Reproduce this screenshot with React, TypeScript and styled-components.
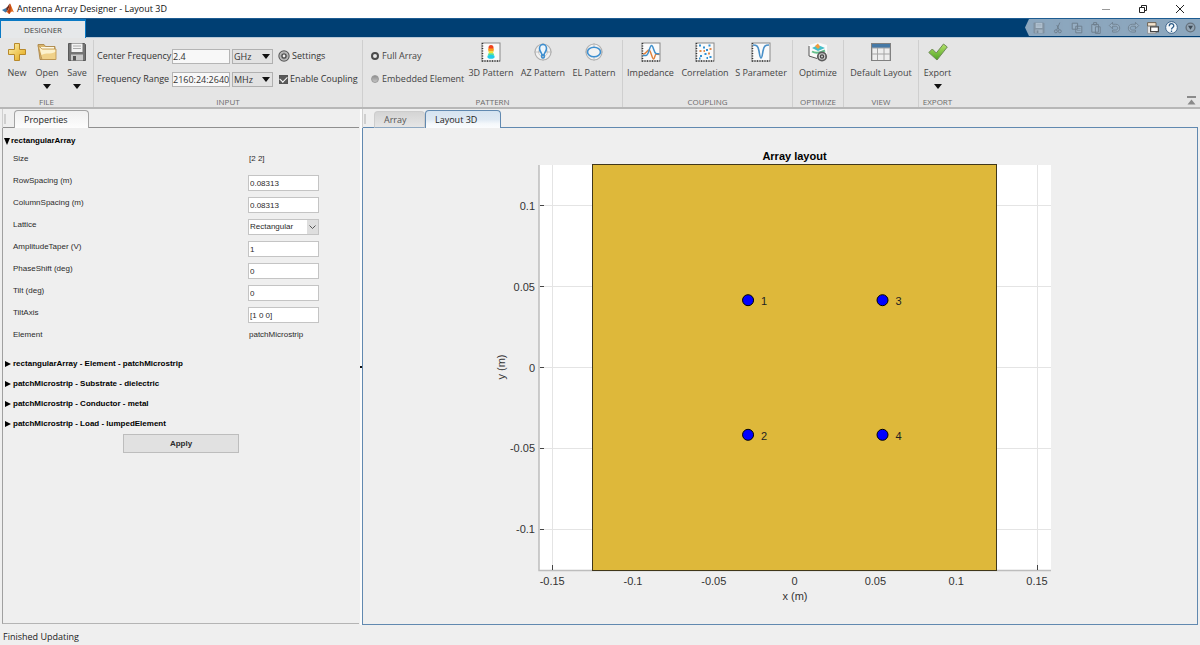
import React, { useState } from "react";
import styled, { createGlobalStyle } from "styled-components";

const uiFont = '"Open Sans", "Noto Sans", sans-serif';
const plainFont = '"Liberation Sans", Arial, sans-serif';

const GlobalStyle = createGlobalStyle`
  * { box-sizing: border-box; }
  body { margin: 0; background: #efefef; font: 9px/14px ${uiFont}; color: #2b2b2b; }
  button, input, select { font: inherit; color: inherit; margin: 0; }
`;

const Window = styled.div`
  display: flex;
  flex-direction: column;
  min-height: 100vh;
`;

/* ---------- title bar ---------- */

const TitleBar = styled.header`
  display: flex;
  align-items: center;
  height: 18px;
  padding: 0 2px;
  background: #fff;
`;

const Title = styled.h1`
  flex: 1;
  margin: 0 0 0 3px;
  font-size: 9px;
  font-weight: 400;
  line-height: 18px;
  color: #111;
`;

const WindowButton = styled.button`
  display: grid;
  place-items: center;
  width: 37px;
  height: 18px;
  padding: 0;
  border: 0;
  background: none;
`;

/* ---------- blue strip ---------- */

const Strip = styled.div`
  display: flex;
  justify-content: space-between;
  height: 20px;
  background: #003f73;
  border-top: 1px solid #1d5c92;
  border-bottom: 1px solid #b9c9d8;
`;

const StripTab = styled.button`
  width: 86px;
  height: 19px;
  padding: 0;
  border: 1px solid #0a79c4;
  border-top-width: 2px;
  border-bottom: 0;
  background: #e6e8ea;
  font-size: 8px;
  line-height: 16px;
  color: #444;
`;

const QuickBar = styled.div`
  display: flex;
  align-items: center;
  height: 17px;
  padding-left: 4px;
  background: #8ca7be;
  clip-path: polygon(4px 0, 100% 0, 100% 100%, 4px 100%, 0 50%);
`;

const QuickButton = styled.button<{ $dim?: boolean }>`
  display: grid;
  place-items: center;
  width: 19px;
  height: 17px;
  padding: 0;
  border: 0;
  background: none;
  opacity: ${(p) => (p.$dim ? 0.35 : 1)};
`;

/* ---------- ribbon ---------- */

const Ribbon = styled.div`
  display: flex;
  height: 71px;
  background: #e5e5e5;
  border-bottom: 2px solid #b7b7b7;
`;

const Group = styled.section<{ $width: number; $last?: boolean }>`
  display: flex;
  flex-direction: column;
  flex: none;
  width: ${(p) => p.$width}px;
  margin-top: 2px;
  border-right: ${(p) => (p.$last ? "0" : "1px solid #cfcfcf")};
`;

const GroupBody = styled.div<{ $indent?: number }>`
  display: flex;
  flex: 1;
  padding-left: ${(p) => p.$indent ?? 0}px;
`;

const GroupName = styled.h2`
  margin: 0;
  font-size: 8px;
  font-weight: 400;
  line-height: 11px;
  text-align: center;
  color: #6b6b6b;
`;

const Tool = styled.button<{ $width: number }>`
  display: flex;
  flex-direction: column;
  align-items: center;
  flex: none;
  width: ${(p) => p.$width}px;
  padding: 2px 0 0;
  border: 0;
  background: none;
  line-height: 14px;
  white-space: nowrap;
  color: #444;

  > svg:first-child { margin-bottom: 4px; }
  > svg:nth-of-type(2) { margin-top: 4px; }
`;

const InputGrid = styled.div`
  display: grid;
  grid-template-columns: 73px 58px 41px 1fr;
  grid-auto-rows: 14px;
  gap: 9px 2px;
  padding-top: 9px;
  line-height: 14px;
  color: #333;
  white-space: nowrap;
`;

const TextBox = styled.input`
  width: 100%;
  min-width: 0;
  height: 15px;
  padding: 0;
  border: 1px solid #b5b5b5;
  background: #f8f8f8;
`;

const Picker = styled.span`
  position: relative;
  display: block;
  height: 15px;

  svg {
    position: absolute;
    right: 3px;
    top: 5px;
    pointer-events: none;
  }
`;

const UnitSelect = styled.select`
  appearance: none;
  display: block;
  width: 100%;
  height: 15px;
  padding: 0 1px;
  border: 1px solid #b0b0b0;
  background: #e2e2e2;
  line-height: 13px;
`;

const SettingsButton = styled.button`
  display: flex;
  align-items: center;
  gap: 2px;
  padding: 0 0 0 3px;
  border: 0;
  background: none;
`;

const CheckLabel = styled.label`
  display: flex;
  align-items: center;
  gap: 2px;
  padding-left: 4px;
`;

const Check = styled.input`
  appearance: none;
  width: 9px;
  height: 9px;
  margin: 0;
  border: 1px solid #555;
  background: #5a5a5a;

  &:checked::after {
    content: "";
    display: block;
    width: 6px;
    height: 4px;
    border: solid #fff;
    border-width: 0 0 1px 1px;
    transform: rotate(-45deg);
  }
`;

const RadioColumn = styled.div`
  display: flex;
  flex-direction: column;
  gap: 9px;
  width: 94px;
  padding: 9px 0 0;
  white-space: nowrap;
  color: #444;
`;

const RadioLabel = styled.label`
  display: flex;
  align-items: center;
  gap: 3px;
  height: 14px;
`;

const Radio = styled.input`
  appearance: none;
  width: 8px;
  height: 8px;
  margin: 0;
  border-radius: 50%;
  border: 1px solid #9a9a9a;
  background: linear-gradient(#909090, #c4c4c4);

  &:checked {
    border: 2px solid #4c4c4c;
    background: #e8e8e8;
  }
`;

const RibbonEnd = styled.div`
  display: flex;
  flex: 1;
  justify-content: flex-end;
  align-items: flex-end;
  padding: 0 4px 2px 0;
`;

const PlainButton = styled.button`
  display: grid;
  padding: 0;
  border: 0;
  background: none;
`;

/* ---------- documents ---------- */

const Workspace = styled.main`
  display: grid;
  grid-template-columns: 357px 3px minmax(0, 1fr);
  flex: 1;
  padding: 0 2px;
`;

const Column = styled.div`
  display: flex;
  flex-direction: column;
  min-width: 0;
`;

const TabRow = styled.div<{ $line: string }>`
  display: flex;
  align-items: flex-end;
  height: 19px;
  padding-top: 1px;
  border-left: 1px solid #d0d0d0;
  box-shadow: inset 0 -1px ${(p) => p.$line};

  &::before {
    content: "";
    align-self: center;
    width: 2px;
    height: 10px;
    margin: 0 8px 0 1px;
    background: #cfcfcf;
  }
`;

const DocTab = styled.button<{ $kind: "plain" | "idle" | "current"; $width: number }>`
  width: ${(p) => p.$width}px;
  height: ${(p) => (p.$kind === "idle" ? 17 : 18)}px;
  padding: 0 0 0 9px;
  text-align: left;
  line-height: 16px;
  color: ${(p) => (p.$kind === "idle" ? "#555" : "#222")};
  border: 1px solid ${(p) => (p.$kind === "current" ? "#6189b0" : p.$kind === "plain" ? "#a4a4a4" : "#cdcdcd")};
  border-bottom: ${(p) => (p.$kind === "idle" ? "1px solid #8fa9c2" : "0")};
  border-radius: 4px 4px 0 0;
  background: ${(p) =>
    p.$kind === "current"
      ? "linear-gradient(#d5e3f0 0%, #dfe9f3 50%, #f4f8fb 75%, #fbfcfd 100%)"
      : p.$kind === "plain"
        ? "linear-gradient(#f0f0f0, #fdfdfd)"
        : "linear-gradient(#d4d4d4, #e6e6e6)"};
`;

const Properties = styled.section`
  flex: 1;
  margin-bottom: 1px;
  padding-top: 4px;
  border-left: 1px solid #a0a0a0;
  border-bottom: 1px solid #b4b4b4;
  font-family: ${plainFont};
  font-size: 8px;
`;

const Splitter = styled.div`
  display: flex;
  align-items: center;
  background: linear-gradient(90deg, #efefef 1px, #fcfcfc 1px);

  &::after {
    content: "";
    width: 2px;
    height: 2px;
    margin-left: 1px;
    background: #111;
  }
`;

const SectionHead = styled.button<{ $open?: boolean }>`
  display: flex;
  align-items: center;
  gap: ${(p) => (p.$open ? 1 : 2)}px;
  width: 100%;
  height: ${(p) => (p.$open ? 18 : 20)}px;
  padding: 0 0 0 ${(p) => (p.$open ? 1 : 2)}px;
  border: 0;
  background: none;
  font-weight: 700;
  text-align: left;
  color: #000;
`;

const PropertyList = styled.div`
  margin-bottom: 6px;
`;

const PropertyRow = styled.div`
  display: grid;
  grid-template-columns: 235px 71px;
  height: 22px;
  padding-left: 10px;
  line-height: 18px;
`;

const PropertyValue = styled.output`
  padding-left: 1px;
`;

const PropertyInput = styled.input`
  width: 100%;
  height: 16px;
  margin-top: 3px;
  padding: 1px 1px 0;
  border: 1px solid #c4c4c4;
  background: #fff;
`;

const LatticePicker = styled(Picker)`
  height: 16px;
  margin-top: 3px;

  svg {
    top: 1px;
    right: 1px;
  }
`;

const LatticeSelect = styled.select`
  appearance: none;
  display: block;
  width: 100%;
  height: 16px;
  padding: 0 1px;
  border: 1px solid #c4c4c4;
  background: #fff;
  line-height: 14px;
`;

const ApplyButton = styled.button`
  display: block;
  width: 116px;
  height: 19px;
  margin: 0 auto;
  padding: 0;
  border: 1px solid #bdbdbd;
  background: #e1e1e1;
  font-weight: 700;
`;

const ChartPanel = styled.section`
  flex: 1;
  border: 1px solid #6189b0;
  border-top: 0;
`;

const Chart = styled.svg`
  display: block;
  width: 100%;
  font-family: ${plainFont};
  font-size: 11px;
  fill: #333;
`;

const ChartTitle = styled.text`
  font-weight: 700;
  fill: #000;
`;

const StatusBar = styled.footer`
  height: 20px;
  padding: 3px;
  line-height: 18px;
  color: #222;
`;

/* ---------- icons ---------- */

const Icon = ({ size = 20, children }: { size?: number; children: React.ReactNode }) => (
  <svg width={size} height={size} viewBox="0 0 20 20" fill="none" aria-hidden="true">
    {children}
  </svg>
);

const DownArrow = () => (
  <svg width="8" height="5" viewBox="0 0 8 5" aria-hidden="true">
    <path d="M0 0h8L4 5z" fill="#111" />
  </svg>
);

const Logo = () => (
  <svg width="12" height="12" viewBox="0 0 24 24" aria-hidden="true">
    <path d="M0 14l8-4 4 4-5 5z" fill="#3f78a8" />
    <path d="M8 10c3-1 4-6 8-9l-2 9-5 8-2 1 3-4z" fill="#6b2a20" />
    <path d="M16 1c3 4 5 13 8 18-4-4-6-2-9 3-2 1-4-4-6-4 4-3 5-10 7-17z" fill="#e06a1c" />
    <path d="M16 1c2 5 2 12 0 18l-1 3c-1-2-2-4-4-4 3-4 4-11 5-17z" fill="#b23b16" />
  </svg>
);

const PlusIcon = () => (
  <Icon>
    <defs>
      <linearGradient id="gold" x1="0" y1="0" x2="1" y2="1">
        <stop offset="0" stopColor="#fdf3b0" />
        <stop offset="1" stopColor="#e3a512" />
      </linearGradient>
    </defs>
    <path d="M7.5 1.5h5v6h6v5h-6v6h-5v-6h-6v-5h6z" fill="url(#gold)" stroke="#b8892a" />
  </Icon>
);

const FolderIcon = () => (
  <Icon>
    <path d="M1 2.5h6l1.500 2H18v13H3z" fill="#d9b56c" stroke="#a57e3d" strokeWidth=".8" />
    <path d="M4 5h13v10H4z" fill="#fff8e0" />
    <path d="M1 3.5l4 3.500h14v10.500H5z" fill="#f0d189" stroke="#b98f4c" strokeWidth=".8" />
    <path d="M2.500 5.500l3 2.300h12.700V10c-5 2.500-9 .500-13.700 3z" fill="#fcf1cd" />
  </Icon>
);

const SaveIcon = ({ size }: { size?: number }) => (
  <Icon size={size}>
    <path d="M1.500 1.500h16l1 1v16h-17z" fill="#747474" stroke="#5a5a5a" />
    <path d="M4.500 1.500h11v8.500h-11z" fill="#f3f3f3" />
    <path d="M6 4h8M6 6.500h8" stroke="#aaa" />
    <path d="M4 12.500h12v6H4z" fill="#c8c8c8" />
    <path d="M6 14h3v4.500H6z" fill="#555" />
  </Icon>
);

const GearIcon = () => (
  <Icon size={12}>
    <circle cx="10" cy="10" r="8.500" fill="#d8d8d8" stroke="#5c5c5c" strokeWidth="2" />
    <circle cx="10" cy="10" r="6" stroke="#9a9a9a" strokeWidth="1.200" />
    <circle cx="10" cy="10" r="3.500" fill="#eee" stroke="#4a4a4a" strokeWidth="2.400" />
  </Icon>
);

const Frame = () => (
  <>
    <rect x="1" y="1" width="18" height="18" fill="#fafafa" stroke="#8a8a8a" />
    <path d="M1.500 1v18H19" stroke="#333" strokeDasharray="1 1.500" strokeWidth="1.500" />
  </>
);

const Pattern3DIcon = () => (
  <Icon>
    <Frame />
    <circle cx="10" cy="5.500" r="2.500" fill="#f0431e" />
    <path d="M7 6.500h6l-.500 3h-5z" fill="#fb9c1c" />
    <path d="M7.500 9.200h5l-.500 2.300H8z" fill="#e8e436" />
    <path d="M7.500 11.200h5l.800 2.300H6.700z" fill="#5fe08a" />
    <ellipse cx="10" cy="14.800" rx="3.600" ry="2" fill="#22cbe8" />
  </Icon>
);

const Target = () => (
  <>
    <circle cx="10" cy="10" r="8" fill="#f2f2f2" stroke="#b0b0b0" strokeWidth="1.200" />
    <circle cx="10" cy="10" r="4.500" stroke="#ccc" />
    <path d="M10 1v18M1 10h18" stroke="#b8b8b8" strokeWidth=".8" />
  </>
);

const AzimuthIcon = () => (
  <Icon>
    <Target />
    <path d="M9 13C9 11 6.500 9.500 6.500 6.500a3.500 4 0 0 1 7 0C13.500 9.500 11 11 11 13z" fill="#eef6fc" stroke="#3d8fd0" strokeWidth="1.600" />
    <circle cx="10" cy="14.500" r="1.500" stroke="#3d8fd0" strokeWidth="1.400" />
  </Icon>
);

const ElevationIcon = () => (
  <Icon>
    <Target />
    <ellipse cx="10" cy="10" rx="6.500" ry="4.800" fill="#f2f2f2" stroke="#3d8fd0" strokeWidth="1.600" />
  </Icon>
);

const ImpedanceIcon = () => (
  <Icon>
    <Frame />
    <path d="M2 12c3 .500 4-4 6-4 2 .500 3 9 4.500 9s1-5 3-5l3 .500" stroke="#e0803a" strokeWidth="1.400" />
    <path d="M2 13.500h3C8 13 8.500 3.500 10.500 3.500S12.500 10 15 11.500l3.500.500" stroke="#3f8fcb" strokeWidth="1.500" />
  </Icon>
);

const CorrelationIcon = () => (
  <Icon>
    <Frame />
    <path d="M4 3.500h2M8 5.500h2M13.500 3.500h2M11 8h2M5 14h2M9.500 12h2M14.500 15h2M4 16.500h1.500M11.500 16h1.500" stroke="#2f8fd4" strokeWidth="2" />
    <path d="M4.500 9h2M14.500 7h2M8.500 9h1.500M13 11.500h2" stroke="#e38a4b" strokeWidth="2" />
  </Icon>
);

const SParameterIcon = () => (
  <Icon>
    <Frame />
    <path d="M2 3c4 0 5 1 6 6 .700 4 1 7 2 7s1.300-3 2-7c1-5 2-6 6-6" stroke="#4a90c8" strokeWidth="1.600" />
  </Icon>
);

const OptimizeIcon = () => (
  <Icon>
    <path d="M1 3l9-2.500L19 3v11l-9 3-9-3z" fill="#fafafa" />
    <path d="M1 4v10l8 2.500" stroke="#555" />
    <path d="M4 6l6-3 7 3-7 3z" fill="#46bfc9" />
    <path d="M7 4l3-2.500 2 3.500-2 2z" fill="#f29b3b" />
    <path d="M4 9.500c4 2.500 9 1 13-1" stroke="#63bf8b" strokeWidth="2" />
    <circle cx="14" cy="14.500" r="4.200" fill="#d2d2d2" stroke="#5c5c5c" strokeWidth="1.800" />
    <circle cx="14" cy="14.500" r="1.600" stroke="#444" strokeWidth="1.300" />
  </Icon>
);

const LayoutIcon = () => (
  <Icon>
    <rect x=".500" y="1.500" width="19" height="17" fill="#a5a5a5" stroke="#808080" />
    <path d="M1 2h18v3.500H1z" fill="#4679a6" />
    <path d="M1.500 6.500H6v5H1.500zM7 6.500h5.500v5H7zM13.500 6.500h5v5h-5zM1.500 12.500H6V18H1.500zM7 12.500h5.500V18H7zM13.500 12.500h5V18h-5z" fill="#eee" />
  </Icon>
);

const CheckIcon = () => (
  <Icon>
    <defs>
      <linearGradient id="leaf" x1="0" y1="0" x2="0" y2="1">
        <stop offset="0" stopColor="#b5e36a" />
        <stop offset="1" stopColor="#4fa324" />
      </linearGradient>
    </defs>
    <path d="M.800 10.500l3.500-3.500 4 4L15.500 2l3.800 3L9 18z" fill="url(#leaf)" stroke="#6f8a58" />
  </Icon>
);

const CutIcon = () => (
  <Icon size={12}>
    <path d="M13 1L8 13M8 5l4 8" stroke="#333" strokeWidth="1.600" />
    <circle cx="6.500" cy="15.500" r="2.500" stroke="#333" strokeWidth="1.600" />
    <circle cx="13" cy="15.500" r="2.500" stroke="#333" strokeWidth="1.600" />
  </Icon>
);

const CopyIcon = () => (
  <Icon size={12}>
    <path d="M2 2h9v10H2zM8 7h10v11H8z" fill="#a9bccd" stroke="#333" strokeWidth="1.600" />
    <path d="M10 11h6M10 14h6" stroke="#333" />
  </Icon>
);

const PasteIcon = () => (
  <Icon size={12}>
    <path d="M3 4h11v13H3zM6 1h5v4H6zM9 8h8v11H9z" fill="#a9bccd" stroke="#333" strokeWidth="1.600" />
  </Icon>
);

const UndoIcon = ({ flip }: { flip?: boolean }) => (
  <Icon size={13}>
    <path
      d={flip ? "M18 7l-5-5v3H8c-8 0-8 12 0 12h5v-3H8c-4 0-4-6 0-6h5v4z" : "M2 7l5-5v3h5c8 0 8 12 0 12H7v-3h5c4 0 4-6 0-6H7v4z"}
      fill="#a9bccd"
      stroke="#333"
      strokeWidth="1.300"
    />
  </Icon>
);

const WindowsIcon = () => (
  <Icon size={12}>
    <path d="M1 1h14v6H1z" fill="#f3e4cf" stroke="#65594a" strokeWidth="1.500" />
    <path d="M1 7h14v12H1z" fill="#e8e8e8" stroke="#777" />
    <path d="M6 8h13v8H6z" fill="#fff" stroke="#444" strokeWidth="2" />
  </Icon>
);

const HelpIcon = () => (
  <Icon size={13}>
    <circle cx="10" cy="10" r="9" fill="#f4f8fb" stroke="#3c6389" strokeWidth="1.500" />
    <path d="M6.500 8c0-5 7-5 7-.500 0 2.500-3.500 2.500-3.500 5.500M10 14.500v2.500" stroke="#2b5b88" strokeWidth="2" />
  </Icon>
);

const MoreIcon = () => (
  <Icon size={11}>
    <circle cx="10" cy="10" r="8" fill="#93a5b4" stroke="#66727d" strokeWidth="2.500" />
    <path d="M5.500 7h9L10 14z" fill="#3d4a56" />
  </Icon>
);

/* ---------- parts ---------- */

type ToolSpec = { label: string; width: number; icon: React.ReactNode; menu?: boolean };

const ToolList = ({ tools }: { tools: ToolSpec[] }) => (
  <>
    {tools.map((tool) => (
      <Tool key={tool.label} $width={tool.width}>
        {tool.icon}
        <span>{tool.label}</span>
        {tool.menu && <DownArrow />}
      </Tool>
    ))}
  </>
);

const fileTools: ToolSpec[] = [
  { label: "New", width: 30, icon: <PlusIcon /> },
  { label: "Open", width: 30, icon: <FolderIcon />, menu: true },
  { label: "Save", width: 30, icon: <SaveIcon />, menu: true },
];
const patternTools: ToolSpec[] = [
  { label: "3D Pattern", width: 52, icon: <Pattern3DIcon /> },
  { label: "AZ Pattern", width: 52, icon: <AzimuthIcon /> },
  { label: "EL Pattern", width: 50, icon: <ElevationIcon /> },
];
const couplingTools: ToolSpec[] = [
  { label: "Impedance", width: 55, icon: <ImpedanceIcon /> },
  { label: "Correlation", width: 54, icon: <CorrelationIcon /> },
  { label: "S Parameter", width: 58, icon: <SParameterIcon /> },
];

const UnitPicker = ({ label, units }: { label: string; units: string[] }) => (
  <Picker>
    <UnitSelect aria-label={label}>
      {units.map((unit) => (
        <option key={unit}>{unit}</option>
      ))}
    </UnitSelect>
    <DownArrow />
  </Picker>
);

const InputFields = () => (
  <InputGrid>
    <label htmlFor="center">Center Frequency</label>
    <TextBox id="center" defaultValue="2.4" />
    <UnitPicker label="Center frequency unit" units={["GHz", "MHz"]} />
    <SettingsButton>
      <GearIcon />
      Settings
    </SettingsButton>
    <label htmlFor="range">Frequency Range</label>
    <TextBox id="range" defaultValue="2160:24:2640" />
    <UnitPicker label="Frequency range unit" units={["MHz", "GHz"]} />
    <CheckLabel>
      <Check type="checkbox" defaultChecked />
      Enable Coupling
    </CheckLabel>
  </InputGrid>
);

type Property = { name: string; value: string; kind: "text" | "input" | "select" };

const properties: Property[] = [
  { name: "Size", value: "[2 2]", kind: "text" },
  { name: "RowSpacing (m)", value: "0.08313", kind: "input" },
  { name: "ColumnSpacing (m)", value: "0.08313", kind: "input" },
  { name: "Lattice", value: "Rectangular", kind: "select" },
  { name: "AmplitudeTaper (V)", value: "1", kind: "input" },
  { name: "PhaseShift (deg)", value: "0", kind: "input" },
  { name: "Tilt (deg)", value: "0", kind: "input" },
  { name: "TiltAxis", value: "[1 0 0]", kind: "input" },
  { name: "Element", value: "patchMicrostrip", kind: "text" },
];

const PropertyField = ({ name, value, kind }: Property) => {
  const id = "property-" + name.split(" ")[0];
  return (
    <PropertyRow>
      <label htmlFor={id}>{name}</label>
      {kind === "text" && <PropertyValue id={id}>{value}</PropertyValue>}
      {kind === "input" && <PropertyInput id={id} defaultValue={value} />}
      {kind === "select" && (
        <LatticePicker>
          <LatticeSelect id={id} defaultValue={value}>
            <option>Rectangular</option>
            <option>Triangular</option>
          </LatticeSelect>
          <svg width="11" height="14" viewBox="0 0 11 14" aria-hidden="true">
            <path d="M0 0h11v14H0z" fill="#dedede" />
            <path d="M2.500 5.500l3 3 3-3" fill="none" stroke="#555" />
          </svg>
        </LatticePicker>
      )}
    </PropertyRow>
  );
};

const closedSections = [
  "rectangularArray - Element - patchMicrostrip",
  "patchMicrostrip - Substrate - dielectric",
  "patchMicrostrip - Conductor - metal",
  "patchMicrostrip - Load - lumpedElement",
];

const ticks = [-0.15, -0.1, -0.05, 0, 0.05, 0.1, 0.15];
const elements = [
  { id: 1, x: -0.0288, y: 0.0416 },
  { id: 2, x: -0.0288, y: -0.0416 },
  { id: 3, x: 0.0544, y: 0.0416 },
  { id: 4, x: 0.0544, y: -0.0416 },
];
const plotX = (v: number) => 431.6 + v * 1616;
const plotY = (v: number) => 239.5 - v * 1618;
const gridX = (v: number) => Math.floor(plotX(v)) + 0.5;
const gridY = (v: number) => Math.floor(plotY(v)) + 0.5;

const LayoutChart = () => (
  <Chart viewBox="0 0 834 496" role="img" aria-label="Array layout">
    <rect x="176" y="37" width="512" height="405" fill="#fff" />
    <g stroke="#e4e4e4">
      {ticks.map((t) => (
        <line key={"v" + t} x1={gridX(t)} x2={gridX(t)} y1="37" y2="442" />
      ))}
      {ticks.slice(1, 6).map((t) => (
        <line key={"h" + t} x1="176" x2="688" y1={gridY(t)} y2={gridY(t)} />
      ))}
    </g>
    <path d="M176 37v405.500H688" fill="none" stroke="#bdbdbd" strokeWidth="1.500" />
    <g stroke="#444">
      <path d={`M${gridX(-0.15)} 442v-5M${gridX(0.15)} 442v-5`} />
      {ticks.slice(1, 6).map((t) => (
        <line key={t} x1="177" x2="181" y1={gridY(t)} y2={gridY(t)} />
      ))}
    </g>
    <rect x="229.500" y="36.500" width="404" height="406" fill="#deb83a" stroke="#40371a" />
    <ChartTitle x="431.500" y="32" textAnchor="middle">
      Array layout
    </ChartTitle>
    {ticks.map((t) => (
      <text key={"x" + t} x={plotX(t)} y="457" textAnchor="middle">
        {t}
      </text>
    ))}
    {ticks.slice(1, 6).map((t) => (
      <text key={"y" + t} x="172" y={plotY(t) + 4} textAnchor="end">
        {t}
      </text>
    ))}
    <text x="432" y="472" textAnchor="middle">
      x (m)
    </text>
    <text transform="translate(142 239) rotate(-90)" textAnchor="middle">
      y (m)
    </text>
    {elements.map((e) => (
      <g key={e.id}>
        <circle cx={plotX(e.x)} cy={plotY(e.y)} r="5.500" fill="#00f" stroke="#000" />
        <text x={plotX(e.x) + 13} y={plotY(e.y) + 5} fill="#222">
          {e.id}
        </text>
      </g>
    ))}
  </Chart>
);

export default function App() {
  const [scope, setScope] = useState("full");
  return (
    <Window>
      <GlobalStyle />
      <TitleBar>
        <Logo />
        <Title>Antenna Array Designer - Layout 3D</Title>
        <WindowButton aria-label="Minimize">
          <svg width="8" height="8">
            <path d="M0 4.500h8" stroke="#999" />
          </svg>
        </WindowButton>
        <WindowButton aria-label="Restore">
          <svg width="8" height="8" fill="none">
            <path d="M.500 2.500h5v5h-5zM2.500 2V.500h5v5H6" stroke="#222" />
          </svg>
        </WindowButton>
        <WindowButton aria-label="Close">
          <svg width="8" height="8">
            <path d="M0 0l8 8M8 0L0 8" stroke="#222" />
          </svg>
        </WindowButton>
      </TitleBar>

      <Strip>
        <StripTab>DESIGNER</StripTab>
        <QuickBar>
          <QuickButton $dim aria-label="Save"><SaveIcon size={12} /></QuickButton>
          <QuickButton $dim aria-label="Cut"><CutIcon /></QuickButton>
          <QuickButton $dim aria-label="Copy"><CopyIcon /></QuickButton>
          <QuickButton $dim aria-label="Paste"><PasteIcon /></QuickButton>
          <QuickButton $dim aria-label="Undo"><UndoIcon /></QuickButton>
          <QuickButton $dim aria-label="Redo"><UndoIcon flip /></QuickButton>
          <QuickButton aria-label="Windows"><WindowsIcon /></QuickButton>
          <QuickButton aria-label="Help"><HelpIcon /></QuickButton>
          <QuickButton aria-label="More"><MoreIcon /></QuickButton>
        </QuickBar>
      </Strip>

      <Ribbon>
        <Group $width={94}>
          <GroupBody $indent={2}>
            <ToolList tools={fileTools} />
          </GroupBody>
          <GroupName>FILE</GroupName>
        </Group>
        <Group $width={269}>
          <GroupBody $indent={3}>
            <InputFields />
          </GroupBody>
          <GroupName>INPUT</GroupName>
        </Group>
        <Group $width={260}>
          <GroupBody $indent={8}>
            <RadioColumn>
              <RadioLabel>
                <Radio type="radio" name="scope" checked={scope === "full"} onChange={() => setScope("full")} />
                Full Array
              </RadioLabel>
              <RadioLabel>
                <Radio type="radio" name="scope" checked={scope === "element"} onChange={() => setScope("element")} />
                Embedded Element
              </RadioLabel>
            </RadioColumn>
            <ToolList tools={patternTools} />
          </GroupBody>
          <GroupName>PATTERN</GroupName>
        </Group>
        <Group $width={170}>
          <GroupBody>
            <ToolList tools={couplingTools} />
          </GroupBody>
          <GroupName>COUPLING</GroupName>
        </Group>
        <Group $width={51}>
          <GroupBody>
            <ToolList tools={[{ label: "Optimize", width: 50, icon: <OptimizeIcon /> }]} />
          </GroupBody>
          <GroupName>OPTIMIZE</GroupName>
        </Group>
        <Group $width={75}>
          <GroupBody>
            <ToolList tools={[{ label: "Default Layout", width: 74, icon: <LayoutIcon /> }]} />
          </GroupBody>
          <GroupName>VIEW</GroupName>
        </Group>
        <Group $width={37} $last>
          <GroupBody>
            <ToolList tools={[{ label: "Export", width: 37, icon: <CheckIcon />, menu: true }]} />
          </GroupBody>
          <GroupName>EXPORT</GroupName>
        </Group>
        <RibbonEnd>
          <PlainButton aria-label="Collapse ribbon">
            <svg width="9" height="9">
              <path d="M0 1h9" stroke="#8a8a8a" strokeWidth="2" />
              <path d="M4.500 3.500L8.500 8.500h-8z" fill="#8a8a8a" />
            </svg>
          </PlainButton>
        </RibbonEnd>
      </Ribbon>

      <Workspace>
        <Column>
          <TabRow $line="#8f8f8f">
            <DocTab $kind="plain" $width={75}>Properties</DocTab>
          </TabRow>
          <Properties>
            <SectionHead $open>
              <svg width="6" height="7">
                <path d="M0 0h6L3 7z" />
              </svg>
              rectangularArray
            </SectionHead>
            <PropertyList>
              {properties.map((p) => (
                <PropertyField key={p.name} {...p} />
              ))}
            </PropertyList>
            {closedSections.map((name) => (
              <SectionHead key={name}>
                <svg width="6" height="6">
                  <path d="M0 0v6l6-3z" />
                </svg>
                {name}
              </SectionHead>
            ))}
            <ApplyButton>Apply</ApplyButton>
          </Properties>
        </Column>
        <Splitter />
        <Column>
          <TabRow $line="#6189b0">
            <DocTab $kind="idle" $width={51}>Array</DocTab>
            <DocTab $kind="current" $width={76}>Layout 3D</DocTab>
          </TabRow>
          <ChartPanel>
            <LayoutChart />
          </ChartPanel>
        </Column>
      </Workspace>

      <StatusBar>Finished Updating</StatusBar>
    </Window>
  );
}
